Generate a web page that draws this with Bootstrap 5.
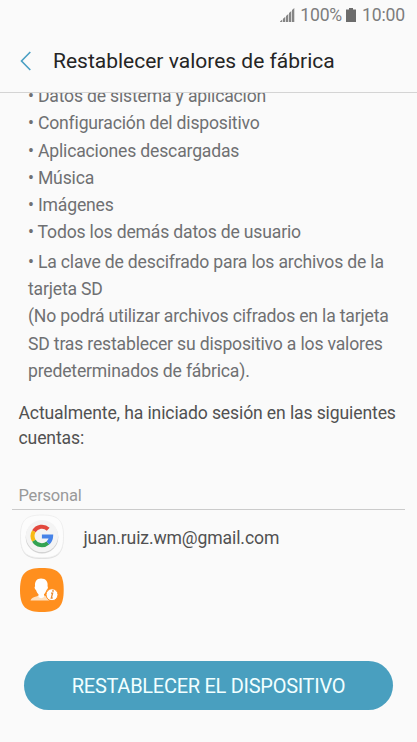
<!DOCTYPE html>
<html lang="es">
<head>
    <meta charset="UTF-8">
    <meta name="viewport" content="width=device-width, initial-scale=1.0">
    <title>Restablecer valores de fábrica</title>
    <link href="https://cdn.jsdelivr.net/npm/bootstrap@5.3.0/dist/css/bootstrap.min.css" rel="stylesheet">
    <style>
        body {
            background: #fafafa;
            color: #6f7072;
            font-family: Roboto, "Liberation Sans", sans-serif;
            font-size: 17.6px;
            line-height: 27.3px;
        }
        .screen { height: 742px; }
        .status-line {
            height: 30px;
            padding-right: 12px;
            font-size: 17.6px;
            letter-spacing: -.18px;
            color: #7d7d7d;
        }
        .status-line span { padding-top: 2px; }
        .signal { margin-right: 5px; }
        .battery { margin: 0 6px 0 4px; }
        .title-bar {
            height: 63px;
            padding-left: 20px;
            border-bottom: 1px solid #d4d4d4;
        }
        .title-bar h1 {
            font-size: 21px;
            line-height: 28px;
            color: #252525;
            margin-left: 21px;
        }
        .erase-list, .sd-note { letter-spacing: -.18px; }
        .erase-list { margin: -10px 0 0 28px; }
        .sd-note { margin: 2px 0 0 28px; }
        .accounts-text {
            margin: 16px 0 0 18.5px;
            line-height: 25px;
            letter-spacing: -.13px;
            color: #515151;
        }
        .account-group {
            margin: 33px 12px 0;
            padding-left: 6.5px;
            height: 26px;
            font-size: 16.5px;
            line-height: 24px;
            letter-spacing: -.2px;
            color: #999;
            border-bottom: 1px solid #cbcbcb;
        }
        .account-row { height: 53px; padding-left: 19px; }
        .account-row span {
            margin-left: 18.5px;
            padding-top: 3px;
            letter-spacing: -.12px;
            color: #515151;
        }
        .btn-reset {
            width: 369px;
            height: 49px;
            margin: 0 0 32px 24px;
            padding: 1px 0 0;
            border: 0;
            font-size: 20px;
            letter-spacing: -.28px;
            background: #499fbf;
            color: #f2ffff;
        }
    </style>
</head>
<body>
    <div class="screen d-flex flex-column overflow-hidden">
        <!-- Barra de estado -->
        <div class="status-line d-flex align-items-center justify-content-end flex-shrink-0">
            <svg class="signal" width="15" height="14" viewBox="0 0 15 14" fill="#858585">
                <path d="M0 13.500l2.300-2V14H0zM3 10.700l2.300-2V14H3zM6 8l2.300-2v8H6zM9 5l2.300-2v11H9zM12 2l2.300-2v14H12z"/>
            </svg>
            <span class="percent">100%</span>
            <svg class="battery" width="10" height="14" viewBox="0 0 10 14" fill="#6c6c6c">
                <path d="M3 0h4v1.500h3V14H0V1.500h3z"/>
            </svg>
            <span class="clock">10:00</span>
        </div>

        <!-- Cabecera -->
        <header class="title-bar d-flex align-items-center flex-shrink-0">
            <svg width="12" height="20" viewBox="0 0 12 20" fill="none" stroke="#4a9fc3" stroke-width="1.6">
                <path d="M10.300 1L1.500 10l8.800 9"/>
            </svg>
            <h1 class="fw-normal mb-0 text-nowrap">Restablecer valores de fábrica</h1>
        </header>

        <!-- Contenido desplazado -->
        <main class="flex-grow-1 overflow-hidden text-nowrap">
            <ul class="erase-list list-unstyled">
                <li>• Datos de sistema y aplicación</li>
                <li>• Configuración del dispositivo</li>
                <li>• Aplicaciones descargadas</li>
                <li>• Música</li>
                <li>• Imágenes</li>
                <li>• Todos los demás datos de usuario</li>
            </ul>
            <p class="sd-note">• La clave de descifrado para los archivos de la<br>tarjeta SD<br>(No podrá utilizar archivos cifrados en la tarjeta<br>SD tras restablecer su dispositivo a los valores<br>predeterminados de fábrica).</p>
            <p class="accounts-text">Actualmente, ha iniciado sesión en las siguientes<br>cuentas:</p>
            <div class="account-group">Personal</div>

            <div class="account-row d-flex align-items-center">
                <svg width="46" height="46" viewBox="0 0 46 46">
                    <path d="M23 2.200C39 2.200 44.600 7 44.600 23.200S39 45 23 45 1.400 39.500 1.400 23.200 7 2.200 23 2.200z" fill="#dedede"/>
                    <path d="M23 1C39 1 44.500 6 44.500 22.200S39 43.800 23 43.800 1.500 38.500 1.500 22.200 7 1 23 1z" fill="#fcfcfc" stroke="#ececec" stroke-width=".8"/>
                    <circle cx="23" cy="23.200" r="16.300" fill="#d3d3d3"/>
                    <circle cx="23" cy="22" r="16.100" fill="#f4f4f4"/>
                    <g fill="none" stroke-width="4">
                        <path d="M14.900 17.300A9.200 9.200 0 0 1 29.200 15.200" stroke="#e2483d"/>
                        <path d="M14.900 26.700A9.200 9.200 0 0 1 14.900 17.300" stroke="#f8bb15"/>
                        <path d="M28.900 28.900A9.200 9.200 0 0 1 14.900 26.700" stroke="#34a353"/>
                        <path d="M22.900 22.500h9.200A9.200 9.200 0 0 1 28.900 28.900" stroke="#4683e8"/>
                    </g>
                </svg>
                <span>juan.ruiz.wm@gmail.com</span>
            </div>
            <div class="account-row d-flex align-items-center">
                <svg width="46" height="46" viewBox="0 0 46 46">
                    <path d="M23 1C39 1 44.700 6 44.700 23S39 45 23 45 1 40 1 23 7 1 23 1z" fill="#ff8f1e"/>
                    <path d="M11.500 33.500c1-3.300 5.500-3.500 8-5h6c2 1 4 2 4.500 5z" fill="#ffe0bd"/>
                    <path d="M22 11.500c5 0 7.300 3.500 6.500 7.800 1 .8.200 3-1 3.700-.6 2-1.500 3.300-2.500 4.200V30c-1.500 1.500-4 1.500-5.500 0v-2.800c-1-1-2-2.200-2.500-4.200-1.400-.8-1.900-3-.9-3.700-.6-4.300 1.400-7.800 5.900-7.800z" fill="#fff"/>
                    <circle cx="33" cy="27.700" r="6" fill="#fff" stroke="#ff8f1e" stroke-width="1"/>
                    <path d="M32 26.200h1.600l-1.300 4.800h1.400" fill="none" stroke="#e98a30" stroke-width="1.300"/>
                    <circle cx="34" cy="23.900" r=".9" fill="#e98a30"/>
                </svg>
            </div>
        </main>

        <button type="button" class="btn-reset btn rounded-pill flex-shrink-0 text-nowrap">RESTABLECER EL DISPOSITIVO</button>
    </div>

    <script src="https://cdn.jsdelivr.net/npm/bootstrap@5.3.0/dist/js/bootstrap.bundle.min.js"></script>
</body>
</html>
